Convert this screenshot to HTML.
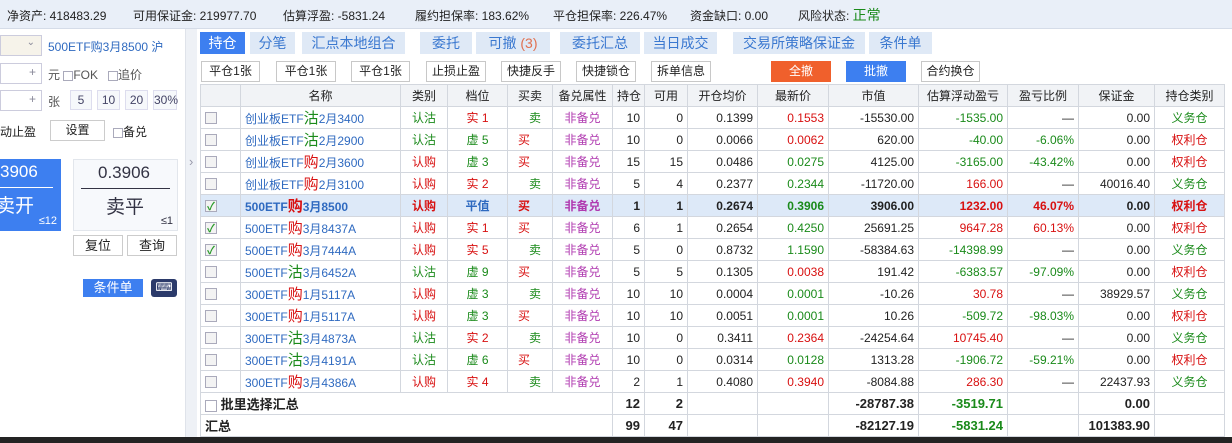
<!DOCTYPE html>
<html><head><meta charset="utf-8"><style>
*{margin:0;padding:0;box-sizing:border-box}
body{width:1232px;height:443px;overflow:hidden;background:#fff;font-family:"Liberation Sans","Noto Sans CJK SC",sans-serif;font-size:12px;color:#222;position:relative}
.a{position:absolute}
#top{left:0;top:0;width:1232px;height:29px;background:#e9eff8;border-bottom:1px solid #d5dce8;font-size:12px;white-space:nowrap}
#top span{position:absolute;top:7px}
#div{left:185px;top:29px;width:12px;height:408px;background:#eef1f6;border-left:1px solid #dfe3ea}
.tab{top:32px;height:22px;line-height:22px;text-align:center;background:#dfe9f6;color:#3a78d0;font-size:14px}
.btn{top:61px;height:21px;line-height:19px;text-align:center;border:1px solid #c8c8c8;background:#fff;font-size:12px}
table{position:absolute;left:200px;top:84px;border-collapse:collapse;table-layout:fixed;width:1024px}
td{height:22px;border:1px solid #d3d7de;padding:0 4px;white-space:nowrap;overflow:hidden;font-size:12px}
tr.h td{background:#f1f3f6;text-align:center;color:#222}
td.r{text-align:right}td.c{text-align:center}
.nm{color:#2f6ac0}.nm b{font-weight:normal;font-size:15px}
.g{color:#1a8a1a}.rd{color:#d81010}.p{color:#b03ab0}.bl{color:#2f6ac0}
.cb{display:inline-block;width:12px;height:12px;border:1px solid #aab;background:#f3f3f3;vertical-align:middle;position:relative}
.cb.k::after{content:"✓";position:absolute;left:1px;top:-3px;color:#2a9a2a;font-size:11px;font-weight:bold}
tr.sel td{background:#dde9f8;font-weight:bold}
tr.sum td{font-weight:bold;font-size:13px}
.inp{border:1px solid #ccd;background:#fff;height:21px}
.sm{border:1px solid #dde;background:#f6f8fb;height:20px;line-height:18px;text-align:center;color:#446;top:90px}
</style></head><body>
<div id="top" class="a"><span style="left:7px">净资产: 418483.29</span><span style="left:133px">可用保证金: 219977.70</span><span style="left:283px">估算浮盈: -5831.24</span><span style="left:415px">履约担保率: 183.62%</span><span style="left:553px">平仓担保率: 226.47%</span><span style="left:690px">资金缺口: 0.00</span><span style="left:798px;top:5px">风险状态: <b style="font-weight:normal;color:#1a8a1a;font-size:14px">正常</b></span></div>

<div class="a inp" style="left:0;top:35px;width:42px;background:#f6f3ea"><span class="a" style="right:6px;top:1px;color:#889;font-size:10px">⌄</span></div>
<div class="a bl" style="left:48px;top:38px">500ETF购3月8500 沪</div>
<div class="a inp" style="left:0;top:63px;width:42px"><span class="a" style="right:5px;top:1px;color:#889">+</span></div>
<div class="a" style="left:48px;top:66px;color:#555">元 <span class="cb" style="width:10px;height:10px;background:#fff"></span>FOK &nbsp; <span class="cb" style="width:10px;height:10px;background:#fff"></span>追价</div>
<div class="a inp" style="left:0;top:90px;width:42px"><span class="a" style="right:5px;top:1px;color:#889">+</span></div>
<div class="a" style="left:48px;top:93px;color:#555">张</div>
<div class="a sm" style="left:70px;width:22px">5</div><div class="a sm" style="left:97px;width:23px">10</div><div class="a sm" style="left:125px;width:23px">20</div><div class="a sm" style="left:153px;width:24px">30%</div>
<div class="a" style="left:0;top:123px">动止盈</div>
<div class="a" style="left:50px;top:120px;width:55px;height:21px;border:1px solid #ccc;text-align:center;line-height:19px">设置</div>
<div class="a" style="left:113px;top:123px"><span class="cb" style="width:10px;height:10px;background:#fff"></span>备兑</div>

<div class="a" style="left:0;top:159px;width:61px;height:72px;background:#3d7ff0;color:#fff">
<div class="a" style="left:0;top:3px;font-size:17px">3906</div>
<div class="a" style="left:0;top:28px;width:53px;border-top:1px solid #fff"></div>
<div class="a" style="left:-4px;top:32px;font-size:19px">卖开</div>
<div class="a" style="right:4px;top:56px;font-size:11px">≤12</div></div>
<div class="a" style="left:73px;top:159px;width:105px;height:72px;background:#f7f9fc;border:1px solid #e2e6ec;color:#334">
<div class="a" style="left:24px;top:3px;font-size:17px">0.3906</div>
<div class="a" style="left:7px;top:28px;width:89px;border-top:1px solid #334"></div>
<div class="a" style="left:32px;top:32px;font-size:19px">卖平</div>
<div class="a" style="right:4px;top:55px;font-size:11px">≤1</div></div>
<div class="a" style="left:73px;top:235px;width:50px;height:21px;border:1px solid #ccc;text-align:center;line-height:19px;font-size:13px">复位</div>
<div class="a" style="left:127px;top:235px;width:50px;height:21px;border:1px solid #ccc;text-align:center;line-height:19px;font-size:13px">查询</div>
<div class="a" style="left:83px;top:279px;width:60px;height:18px;background:#3d7ff0;color:#fff;text-align:center;line-height:18px;font-size:13px">条件单</div>
<div class="a" style="left:151px;top:279px;width:26px;height:18px;background:#2b3a6a;border-radius:3px;color:#fff;text-align:center;line-height:16px;font-size:12px">⌨</div>

<div id="div" class="a"><span class="a" style="left:3px;top:125px;color:#99a;font-size:13px">›</span></div>

<div class="a tab" style="left:200px;width:45px;background:#3d7ff0;color:#fff">持仓</div>
<div class="a tab" style="left:250px;width:45px">分笔</div>
<div class="a tab" style="left:302px;width:103px">汇点本地组合</div>
<div class="a tab" style="left:420px;width:52px">委托</div>
<div class="a tab" style="left:476px;width:74px">可撤 <span style="color:#e07050">(3)</span></div>
<div class="a tab" style="left:560px;width:80px">委托汇总</div>
<div class="a tab" style="left:644px;width:73px">当日成交</div>
<div class="a tab" style="left:733px;width:132px">交易所策略保证金</div>
<div class="a tab" style="left:869px;width:63px">条件单</div>

<div class="a btn" style="left:201px;width:59px">平仓1张</div>
<div class="a btn" style="left:276px;width:60px">平仓1张</div>
<div class="a btn" style="left:351px;width:59px">平仓1张</div>
<div class="a btn" style="left:426px;width:60px">止损止盈</div>
<div class="a btn" style="left:501px;width:60px">快捷反手</div>
<div class="a btn" style="left:576px;width:60px">快捷锁仓</div>
<div class="a btn" style="left:651px;width:60px">拆单信息</div>
<div class="a btn" style="left:771px;width:60px;background:#f0602c;border-color:#f0602c;color:#fff">全撤</div>
<div class="a btn" style="left:846px;width:60px;background:#3d7ff0;border-color:#3d7ff0;color:#fff">批撤</div>
<div class="a btn" style="left:921px;width:59px">合约换仓</div>

<table>
<colgroup><col style="width:40px"><col style="width:160px"><col style="width:47px"><col style="width:60px"><col style="width:45px"><col style="width:60px"><col style="width:32px"><col style="width:43px"><col style="width:70px"><col style="width:71px"><col style="width:90px"><col style="width:89px"><col style="width:71px"><col style="width:76px"><col style="width:70px"></colgroup>
<tr class="h"><td></td><td>名称</td><td>类别</td><td>档位</td><td>买卖</td><td>备兑属性</td><td>持仓</td><td>可用</td><td>开仓均价</td><td>最新价</td><td>市值</td><td>估算浮动盈亏</td><td>盈亏比例</td><td>保证金</td><td>持仓类别</td></tr>
<tr><td><span class="cb"></span></td><td class="nm">创业板ETF<b class="g">沽</b>2月3400</td><td class="c g">认沽</td><td class="c rd">实 1</td><td class="c g">&nbsp;&nbsp;&nbsp;卖</td><td class="c p">非备兑</td><td class="r">10</td><td class="r">0</td><td class="r">0.1399</td><td class="r rd">0.1553</td><td class="r">-15530.00</td><td class="r g">-1535.00</td><td class="r">—</td><td class="r">0.00</td><td class="c g">义务仓</td></tr>
<tr><td><span class="cb"></span></td><td class="nm">创业板ETF<b class="g">沽</b>2月2900</td><td class="c g">认沽</td><td class="c g">虚 5</td><td class="rd" style="padding-left:10px">买</td><td class="c p">非备兑</td><td class="r">10</td><td class="r">0</td><td class="r">0.0066</td><td class="r rd">0.0062</td><td class="r">620.00</td><td class="r g">-40.00</td><td class="r g">-6.06%</td><td class="r">0.00</td><td class="c rd">权利仓</td></tr>
<tr><td><span class="cb"></span></td><td class="nm">创业板ETF<b class="rd">购</b>2月3600</td><td class="c rd">认购</td><td class="c g">虚 3</td><td class="rd" style="padding-left:10px">买</td><td class="c p">非备兑</td><td class="r">15</td><td class="r">15</td><td class="r">0.0486</td><td class="r g">0.0275</td><td class="r">4125.00</td><td class="r g">-3165.00</td><td class="r g">-43.42%</td><td class="r">0.00</td><td class="c rd">权利仓</td></tr>
<tr><td><span class="cb"></span></td><td class="nm">创业板ETF<b class="rd">购</b>2月3100</td><td class="c rd">认购</td><td class="c rd">实 2</td><td class="c g">&nbsp;&nbsp;&nbsp;卖</td><td class="c p">非备兑</td><td class="r">5</td><td class="r">4</td><td class="r">0.2377</td><td class="r g">0.2344</td><td class="r">-11720.00</td><td class="r rd">166.00</td><td class="r">—</td><td class="r">40016.40</td><td class="c g">义务仓</td></tr>
<tr class="sel"><td><span class="cb k"></span></td><td class="nm">500ETF<b class="rd" style="font-weight:bold">购</b>3月8500</td><td class="c rd">认购</td><td class="c bl">平值</td><td class="rd" style="padding-left:10px">买</td><td class="c p">非备兑</td><td class="r">1</td><td class="r">1</td><td class="r">0.2674</td><td class="r g">0.3906</td><td class="r">3906.00</td><td class="r rd">1232.00</td><td class="r rd">46.07%</td><td class="r">0.00</td><td class="c rd">权利仓</td></tr>
<tr><td><span class="cb k"></span></td><td class="nm">500ETF<b class="rd">购</b>3月8437A</td><td class="c rd">认购</td><td class="c rd">实 1</td><td class="rd" style="padding-left:10px">买</td><td class="c p">非备兑</td><td class="r">6</td><td class="r">1</td><td class="r">0.2654</td><td class="r g">0.4250</td><td class="r">25691.25</td><td class="r rd">9647.28</td><td class="r rd">60.13%</td><td class="r">0.00</td><td class="c rd">权利仓</td></tr>
<tr><td><span class="cb k"></span></td><td class="nm">500ETF<b class="rd">购</b>3月7444A</td><td class="c rd">认购</td><td class="c rd">实 5</td><td class="c g">&nbsp;&nbsp;&nbsp;卖</td><td class="c p">非备兑</td><td class="r">5</td><td class="r">0</td><td class="r">0.8732</td><td class="r g">1.1590</td><td class="r">-58384.63</td><td class="r g">-14398.99</td><td class="r">—</td><td class="r">0.00</td><td class="c g">义务仓</td></tr>
<tr><td><span class="cb"></span></td><td class="nm">500ETF<b class="g">沽</b>3月6452A</td><td class="c g">认沽</td><td class="c g">虚 9</td><td class="rd" style="padding-left:10px">买</td><td class="c p">非备兑</td><td class="r">5</td><td class="r">5</td><td class="r">0.1305</td><td class="r rd">0.0038</td><td class="r">191.42</td><td class="r g">-6383.57</td><td class="r g">-97.09%</td><td class="r">0.00</td><td class="c rd">权利仓</td></tr>
<tr><td><span class="cb"></span></td><td class="nm">300ETF<b class="rd">购</b>1月5117A</td><td class="c rd">认购</td><td class="c g">虚 3</td><td class="c g">&nbsp;&nbsp;&nbsp;卖</td><td class="c p">非备兑</td><td class="r">10</td><td class="r">10</td><td class="r">0.0004</td><td class="r g">0.0001</td><td class="r">-10.26</td><td class="r rd">30.78</td><td class="r">—</td><td class="r">38929.57</td><td class="c g">义务仓</td></tr>
<tr><td><span class="cb"></span></td><td class="nm">300ETF<b class="rd">购</b>1月5117A</td><td class="c rd">认购</td><td class="c g">虚 3</td><td class="rd" style="padding-left:10px">买</td><td class="c p">非备兑</td><td class="r">10</td><td class="r">10</td><td class="r">0.0051</td><td class="r g">0.0001</td><td class="r">10.26</td><td class="r g">-509.72</td><td class="r g">-98.03%</td><td class="r">0.00</td><td class="c rd">权利仓</td></tr>
<tr><td><span class="cb"></span></td><td class="nm">300ETF<b class="g">沽</b>3月4873A</td><td class="c g">认沽</td><td class="c rd">实 2</td><td class="c g">&nbsp;&nbsp;&nbsp;卖</td><td class="c p">非备兑</td><td class="r">10</td><td class="r">0</td><td class="r">0.3411</td><td class="r rd">0.2364</td><td class="r">-24254.64</td><td class="r rd">10745.40</td><td class="r">—</td><td class="r">0.00</td><td class="c g">义务仓</td></tr>
<tr><td><span class="cb"></span></td><td class="nm">300ETF<b class="g">沽</b>3月4191A</td><td class="c g">认沽</td><td class="c g">虚 6</td><td class="rd" style="padding-left:10px">买</td><td class="c p">非备兑</td><td class="r">10</td><td class="r">0</td><td class="r">0.0314</td><td class="r g">0.0128</td><td class="r">1313.28</td><td class="r g">-1906.72</td><td class="r g">-59.21%</td><td class="r">0.00</td><td class="c rd">权利仓</td></tr>
<tr><td><span class="cb"></span></td><td class="nm">300ETF<b class="rd">购</b>3月4386A</td><td class="c rd">认购</td><td class="c rd">实 4</td><td class="c g">&nbsp;&nbsp;&nbsp;卖</td><td class="c p">非备兑</td><td class="r">2</td><td class="r">1</td><td class="r">0.4080</td><td class="r rd">0.3940</td><td class="r">-8084.88</td><td class="r rd">286.30</td><td class="r">—</td><td class="r">22437.93</td><td class="c g">义务仓</td></tr>
<tr class="sum"><td colspan="6" style="border-right:1px solid #d3d7de"><span class="cb" style="background:#fff"></span> 批里选择汇总</td><td class="r">12</td><td class="r">2</td><td></td><td></td><td class="r">-28787.38</td><td class="r g">-3519.71</td><td></td><td class="r">0.00</td><td></td></tr>
<tr class="sum"><td colspan="6">汇总</td><td class="r">99</td><td class="r">47</td><td></td><td></td><td class="r">-82127.19</td><td class="r g">-5831.24</td><td></td><td class="r">101383.90</td><td></td></tr>
</table>
<div class="a" style="left:0;top:437px;width:1232px;height:6px;background:#232323"></div>
</body></html>
